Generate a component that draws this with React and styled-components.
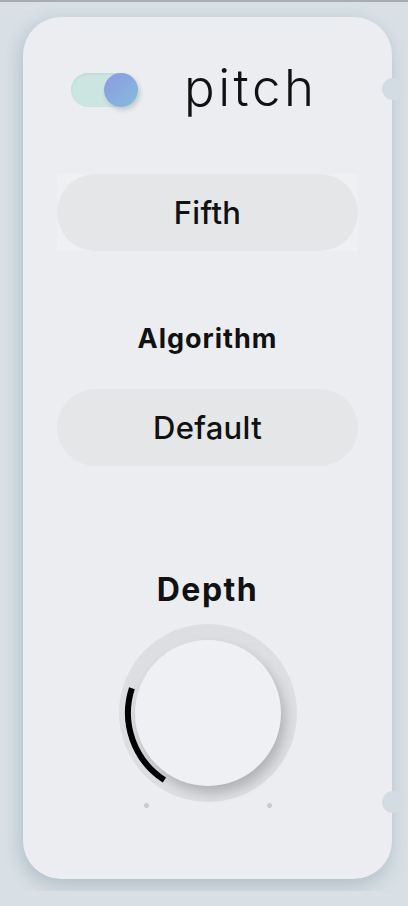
import React from 'react';
import styled, { createGlobalStyle } from 'styled-components';

const GlobalStyle = createGlobalStyle`
    html, body {
        margin: 0;
        padding: 0;
        background: #d8e0e5;
    }

    body {
        font-family: Inter, "Noto Sans", sans-serif;
        border-top: 2px solid #a9adb1;
    }
`;

const Page = styled.div`
    display: flex;
    justify-content: flex-start;
    padding: 15px 0 0 23px;
    height: 889px;
    box-sizing: border-box;
`;

const Card = styled.div`
    position: relative;
    width: 369px;
    height: 862px;
    box-sizing: border-box;
    padding: 56px 34px 0;
    border-radius: 38px;
    background: #ebedf1;
    box-shadow:
        0 10px 18px rgba(120, 140, 155, 0.28),
        -6px 0 14px rgba(140, 160, 175, 0.18);
    display: flex;
    flex-direction: column;
    align-items: stretch;
`;

const Notch = styled.div`
    position: absolute;
    right: -12px;
    top: ${({ top }) => top}px;
    width: 22px;
    height: 22px;
    border-radius: 50%;
    background: #d3dce2;
`;

const Header = styled.div`
    display: flex;
    align-items: center;
    gap: 46px;
    padding-left: 14px;
    height: 34px;
`;

const ToggleTrack = styled.div`
    position: relative;
    width: 67px;
    height: 34px;
    border-radius: 17px;
    background: #cde5e0;
    box-shadow: inset 0 1px 3px rgba(0, 0, 0, 0.07);
`;

const ToggleKnob = styled.div`
    position: absolute;
    right: 0;
    top: 0;
    width: 34px;
    height: 34px;
    border-radius: 50%;
    background: linear-gradient(135deg, #8f98e4 0%, #82bedb 100%);
    box-shadow: 2px 3px 5px rgba(0, 0, 0, 0.16);
`;

const Title = styled.div`
    font-family: Inter, sans-serif;
    font-weight: 300;
    font-size: 51px;
    line-height: 34px;
    letter-spacing: 3.5px;
    color: #111;
    margin-top: -4px;
`;

const SelectWrap = styled.div`
    margin-top: ${({ gap }) => gap}px;
    background: ${({ highlighted }) => (highlighted ? '#eef0f2' : 'transparent')};
`;

const SelectButton = styled.div`
    height: 77px;
    border-radius: 39px;
    background: #e5e6e8;
    display: flex;
    align-items: center;
    justify-content: center;
    font-family: Inter, sans-serif;
    font-size: 31px;
    font-weight: 500;
    letter-spacing: 0.3px;
    color: #111;
`;

const Label = styled.div`
    margin-top: ${({ gap }) => gap}px;
    text-align: center;
    font-family: Inter, sans-serif;
    font-weight: 700;
    font-size: ${({ size }) => size}px;
    line-height: ${({ size }) => size}px;
    color: #111;
    letter-spacing: ${({ spacing }) => spacing || 0}px;
`;

const KnobArea = styled.div`
    margin-top: 18px;
    display: flex;
    flex-direction: column;
    align-items: center;
`;

const KnobRing = styled.div`
    position: relative;
    width: 178px;
    height: 178px;
    border-radius: 50%;
    background: radial-gradient(circle, #dcdee2 72%, #e3e5e8 88%, #ebedf1 100%);
    display: flex;
    align-items: center;
    justify-content: center;
`;

const KnobFace = styled.div`
    width: 146px;
    height: 146px;
    border-radius: 50%;
    background: #eff0f4;
    box-shadow: 4px 7px 12px rgba(0, 0, 0, 0.2);
`;

const Arc = styled.svg`
    position: absolute;
    left: 0;
    top: 0;
`;

const Dots = styled.div`
    display: flex;
    justify-content: space-between;
    width: 128px;
    margin-top: 1px;
`;

const Dot = styled.div`
    width: 5px;
    height: 5px;
    border-radius: 50%;
    background: #c9cbce;
`;

function Toggle() {
    return (
        <ToggleTrack>
            <ToggleKnob />
        </ToggleTrack>
    );
}

function Knob() {
    return (
        <KnobArea>
            <KnobRing>
                <KnobFace />
                <Arc width="178" height="178" viewBox="0 0 178 178">
                    <path
                        d="M45.4 156.1 A80 80 0 0 1 12.9 64.3"
                        fill="none"
                        stroke="#000"
                        strokeWidth="6"
                    />
                </Arc>
            </KnobRing>
            <Dots>
                <Dot />
                <Dot />
            </Dots>
        </KnobArea>
    );
}

export default function App() {
    return (
        <>
            <GlobalStyle />
            <Page>
                <Card>
                    <Notch top={61} />
                    <Notch top={774} />
                    <Header>
                        <Toggle />
                        <Title>pitch</Title>
                    </Header>
                    <SelectWrap gap={67} highlighted>
                        <SelectButton>Fifth</SelectButton>
                    </SelectWrap>
                    <Label gap={74} size={27} spacing={1}>
                        Algorithm
                    </Label>
                    <SelectWrap gap={37}>
                        <SelectButton>Default</SelectButton>
                    </SelectWrap>
                    <Label gap={108} size={32} spacing={1.5}>
                        Depth
                    </Label>
                    <Knob />
                </Card>
            </Page>
        </>
    );
}
